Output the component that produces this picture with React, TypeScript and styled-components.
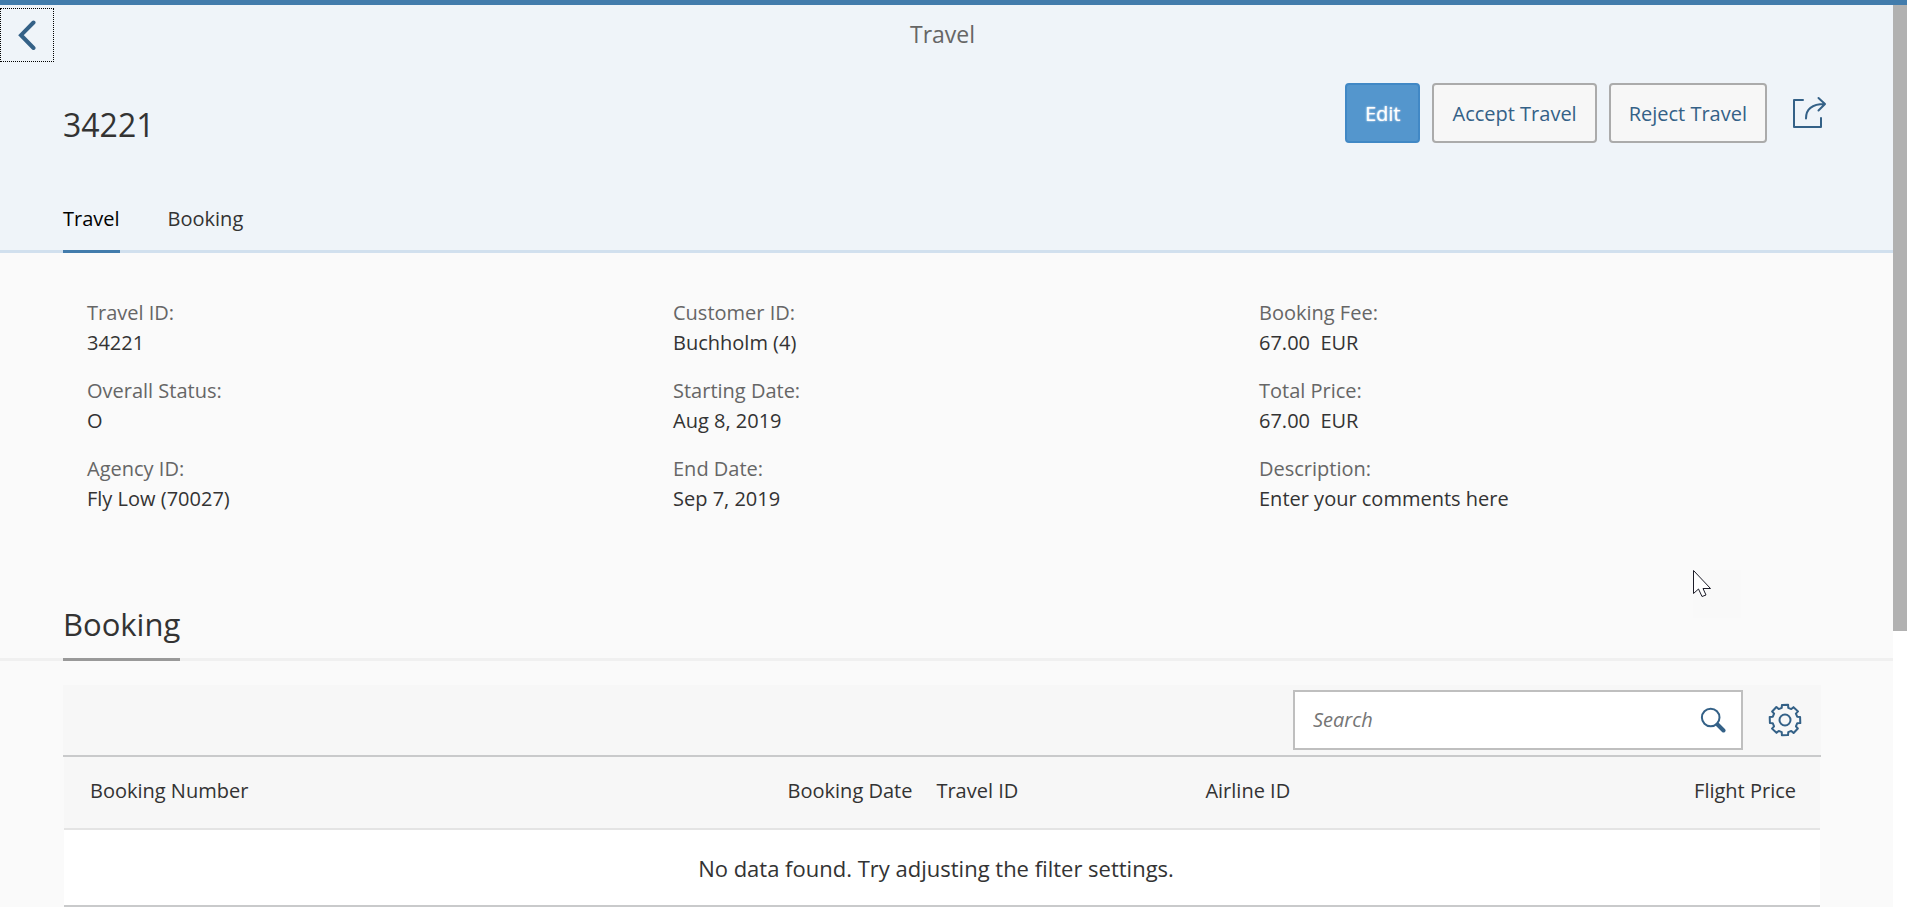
import React from 'react';
import styled, { createGlobalStyle } from 'styled-components';

const GlobalStyle = createGlobalStyle`
  *, *::before, *::after { box-sizing: border-box; }
  body {
    margin: 0;
    background: #fafafa;
    color: #333;
    font-family: "Open Sans", "Noto Sans", sans-serif;
    font-size: 20px;
    line-height: 30px;
  }
  button, input { font: inherit; }
  h1, h2, p, dl, dd { margin: 0; font-weight: 400; }
`;

const Shell = styled.div`
  display: flex;
  flex-direction: column;
  min-height: 100vh;
  border-top: 5px solid #427cac;
`;

const Body = styled.div`
  display: flex;
  flex: 1;
`;

const Page = styled.main`
  flex: 1;
  min-width: 0;
`;

const ScrollTrack = styled.div`
  width: 14px;
  background: #fff;
`;

const ScrollThumb = styled.div`
  height: 69vh;
  background: #b1b1b1;
`;

const Header = styled.header`
  background: #eff4f9;
`;

const NavBar = styled.div`
  display: grid;
  grid-template-columns: 54px 1fr 62px;
  align-items: center;
  padding: 3px 0;
`;

const NavTitle = styled.h1`
  padding-bottom: 2px;
  font-size: 23px;
  line-height: 32px;
  color: #666;
  text-align: center;
`;

const IconButton = styled.button<{ $width?: number }>`
  display: flex;
  align-items: center;
  justify-content: center;
  width: ${(p) => p.$width ?? 60}px;
  height: 60px;
  padding: 0;
  border: 0;
  background: none;
  color: #346187;
  cursor: pointer;
`;

const BackButton = styled(IconButton)`
  width: 54px;
  height: 54px;
  border: 1px dotted #000;
`;

const TitleBar = styled.div`
  display: flex;
  align-items: flex-start;
  justify-content: space-between;
  height: 120px;
  padding: 18px 54px 0 63px;
`;

const ObjectTitle = styled.h2`
  padding-top: 20px;
  font-size: 32px;
  line-height: 44px;
`;

const Actions = styled.div`
  display: flex;
  gap: 12px;
`;

const Button = styled.button<{ $primary?: boolean }>`
  height: 60px;
  padding: 2px 18px 0;
  border: 2px solid ${(p) => (p.$primary ? '#4188c5' : '#ababab')};
  border-radius: 4px;
  background: ${(p) => (p.$primary ? '#5496cd' : '#f7f7f7')};
  color: ${(p) => (p.$primary ? '#fff' : '#346187')};
  text-shadow: ${(p) => (p.$primary ? '0 0 2px #fff' : 'none')};
  white-space: nowrap;
  cursor: pointer;
`;

const Tabs = styled.nav`
  display: flex;
  gap: 48px;
  padding: 0 63px;
  border-bottom: 3px solid #d1e0ee;
`;

const Tab = styled.a<{ $active?: boolean }>`
  margin-bottom: -3px;
  padding: 19px 0 16px;
  border-bottom: 3px solid ${(p) => (p.$active ? '#427cac' : 'transparent')};
  color: ${(p) => (p.$active ? '#000' : '#333')};
  text-decoration: none;
`;

const Fields = styled.dl`
  display: grid;
  grid-template-columns: repeat(3, 1fr);
  grid-template-rows: repeat(3, auto);
  grid-auto-flow: column;
  row-gap: 18px;
  padding: 45px 72px 88px 63px;
`;

const Field = styled.div`
  padding-left: 24px;
`;

const Label = styled.dt`
  color: #666;
`;

const Value = styled.dd`
  white-space: pre-wrap;
`;

const SectionHead = styled.div`
  display: flex;
  padding: 0 63px;
  border-bottom: 3px solid #f0f0f0;
`;

const SectionTitle = styled.h2`
  margin-bottom: -3px;
  padding-bottom: 12px;
  border-bottom: 3px solid #999;
  font-size: 31px;
  line-height: 44px;
`;

const TablePanel = styled.section`
  padding: 24px 72px 0 63px;
`;

const Toolbar = styled.div`
  display: flex;
  justify-content: flex-end;
  gap: 12px;
  padding: 5px 6px;
  border-bottom: 2px solid #c9cacb;
  background: #f7f7f7;
`;

const SearchBox = styled.form`
  display: flex;
  width: 450px;
  height: 60px;
  border: 2px solid #bfbfbf;
  background: #fff;
`;

const SearchInput = styled.input`
  flex: 1;
  min-width: 0;
  padding: 0 18px;
  border: 0;
  outline: 0;
  background: none;
  color: #333;
  &::placeholder {
    color: #757575;
    font-style: italic;
    opacity: 1;
  }
`;

const SearchButton = styled(IconButton)`
  height: 56px;
`;

const Table = styled.table`
  width: calc(100% - 2px);
  margin: 0 1px;
  border-collapse: separate;
  border-spacing: 0;
  table-layout: fixed;
`;

const HeadCell = styled.th<{ $width?: string; $right?: boolean }>`
  width: ${(p) => p.$width ?? 'auto'};
  height: 73px;
  padding: 0 12px 4px;
  border-bottom: 2px solid #e4e4e4;
  background: #f7f7f7;
  font-weight: 400;
  text-align: ${(p) => (p.$right ? 'right' : 'left')};
  white-space: nowrap;
  &:first-child { padding-left: 26px; }
  &:last-child { padding-right: 24px; }
`;

const EmptyCell = styled.td`
  height: 77px;
  padding: 0 12px 0 0;
  border-bottom: 2px solid #c9cacb;
  background: #fff;
  font-size: 22px;
  text-align: center;
`;

const Pointer = styled.svg`
  position: absolute;
  top: 570px;
  right: 166px;
  background: #f9f9f9;
  pointer-events: none;
`;

const BackIcon = () => (
  <svg width="18" height="30" viewBox="0 0 18 30" fill="none" stroke="currentColor" strokeWidth="4" strokeLinecap="round" aria-hidden="true">
    <path d="M15.5 2.5 3 15.2 15.5 28" strokeLinejoin="miter" />
  </svg>
);

const ShareIcon = () => (
  <svg width="36" height="34" viewBox="0 0 36 34" fill="none" stroke="currentColor" strokeWidth="2" strokeLinecap="round" strokeLinejoin="round" aria-hidden="true">
    <path d="M12 4H3v27h27v-9M15 22.500C15 13 21 8 33.500 8M27.500 2l6.500 6-6.500 6.500" />
  </svg>
);

const SearchIcon = () => (
  <svg width="26" height="26" viewBox="0 0 26 26" fill="none" stroke="currentColor" strokeWidth="2" strokeLinecap="round" aria-hidden="true">
    <circle cx="10.700" cy="10.500" r="8.800" />
    <path d="m17.500 17.500 6 6" strokeWidth="4" />
  </svg>
);

const polar = (radius: number, degrees: number) => {
  const a = (degrees * Math.PI) / 180;
  return `${(17 + radius * Math.sin(a)).toFixed(2)} ${(17 - radius * Math.cos(a)).toFixed(2)}`;
};

const gearOutline = `M${Array.from({ length: 8 }, (_, i) => i * 45)
  .flatMap((d) => [
    polar(12.6, d - 15),
    polar(15.4, d - 11.5),
    polar(15.6, d + 11.5),
    polar(12.6, d + 15),
  ])
  .join('L')}Z`;

const GearIcon = () => (
  <svg width="34" height="34" viewBox="0 0 34 34" fill="none" stroke="currentColor" strokeWidth="2" strokeLinejoin="round" aria-hidden="true">
    <path d={gearOutline} />
    <circle cx="17" cy="17" r="5.500" />
  </svg>
);

const fields: [string, string][] = [
  ['Travel ID:', '34221'],
  ['Overall Status:', 'O'],
  ['Agency ID:', 'Fly Low (70027)'],
  ['Customer ID:', 'Buchholm (4)'],
  ['Starting Date:', 'Aug 8, 2019'],
  ['End Date:', 'Sep 7, 2019'],
  ['Booking Fee:', '67.00\u00a0 EUR'],
  ['Total Price:', '67.00\u00a0 EUR'],
  ['Description:', 'Enter your comments here'],
];

export default function App() {
  return (
    <>
      <GlobalStyle />
      <Shell>
        <Body>
          <Page>
            <Header>
              <NavBar>
                <BackButton type="button" aria-label="Back"><BackIcon /></BackButton>
                <NavTitle>Travel</NavTitle>
              </NavBar>
              <TitleBar>
                <ObjectTitle>34221</ObjectTitle>
                <Actions>
                  <Button type="button" $primary>Edit</Button>
                  <Button type="button">Accept Travel</Button>
                  <Button type="button">Reject Travel</Button>
                  <IconButton type="button" aria-label="Share"><ShareIcon /></IconButton>
                </Actions>
              </TitleBar>
              <Tabs>
                <Tab href="#travel" $active>Travel</Tab>
                <Tab href="#booking">Booking</Tab>
              </Tabs>
            </Header>

            <Fields id="travel">
              {fields.map(([label, value]) => (
                <Field key={label}>
                  <Label>{label}</Label>
                  <Value>{value}</Value>
                </Field>
              ))}
            </Fields>

            <SectionHead id="booking">
              <SectionTitle>Booking</SectionTitle>
            </SectionHead>
            <TablePanel>
              <Toolbar>
                <SearchBox role="search" onSubmit={(e) => e.preventDefault()}>
                  <SearchInput type="text" placeholder="Search" aria-label="Search" />
                  <SearchButton type="submit" aria-label="Start search" $width={56}><SearchIcon /></SearchButton>
                </SearchBox>
                <IconButton type="button" aria-label="Settings"><GearIcon /></IconButton>
              </Toolbar>
              <Table>
                <thead>
                  <tr>
                    <HeadCell scope="col" $width="34%">Booking Number</HeadCell>
                    <HeadCell scope="col" $width="15%" $right>Booking Date</HeadCell>
                    <HeadCell scope="col" $width="269px">Travel ID</HeadCell>
                    <HeadCell scope="col">Airline ID</HeadCell>
                    <HeadCell scope="col" $right>Flight Price</HeadCell>
                  </tr>
                </thead>
                <tbody>
                  <tr>
                    <EmptyCell colSpan={5}>No data found. Try adjusting the filter settings.</EmptyCell>
                  </tr>
                </tbody>
              </Table>
            </TablePanel>
          </Page>
          <ScrollTrack aria-hidden="true"><ScrollThumb /></ScrollTrack>
        </Body>
      </Shell>
      <Pointer width="48" height="48" viewBox="0 0 48 48" aria-hidden="true">
        <path d="M.5.500v23l5-4.500 3.500 7.500 4-1.500-3-6.500h7.500Z" fill="#fff" stroke="#1c1c28" />
      </Pointer>
    </>
  );
}
